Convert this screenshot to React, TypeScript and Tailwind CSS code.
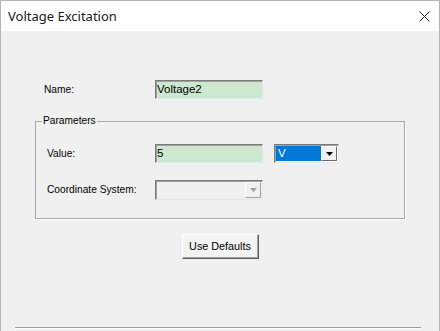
export default function App() {
  return (
    <div className="w-[440px] h-[331px] bg-[#f0f0f0] border border-b-0 border-[#b4b4b4] flex flex-col font-['Liberation_Sans',Arial,sans-serif] text-black overflow-hidden">
      {/* title bar */}
      <div className="h-[30px] bg-white flex items-center justify-between pl-[7px] pr-[9px] shrink-0">
        <span className="font-['Noto_Sans',sans-serif] text-[13px] text-[#1a1a1a] leading-none">
          Voltage Excitation
        </span>
        <svg width="11" height="11" viewBox="0 0 11 11" className="mt-[1px]">
          <path d="M0.5 0.5 L10.5 10.5 M10.5 0.5 L0.5 10.5" stroke="#222" strokeWidth="1" />
        </svg>
      </div>

      {/* name row */}
      <div className="flex items-center h-[19px] mt-[49px] pl-[43px]">
        <span className="w-[111px] text-[10.2px]">Name:</span>
        <div className="w-[108px] h-[19px] bg-[#cce8cf] border border-t-[#7a7a7a] border-l-[#7a7a7a] border-r-[#e8e8e8] border-b-[#e8e8e8] shadow-[inset_1px_1px_0_#a0a0a0] flex items-center pl-[1px] text-[11.5px] leading-none">
          Voltage2
        </div>
      </div>

      {/* parameters group */}
      <div className="relative ml-[34px] mt-[22px] w-[370px] h-[98px] border border-[#a8a8a8] shadow-[1px_1px_0_#fff] pt-[22px] pl-[11px]">
        <span className="absolute left-[6px] -top-[7px] px-[1px] bg-[#f0f0f0] text-[10.2px] leading-[12px]">
          Parameters
        </span>
        <div className="flex items-center h-[19px]">
          <span className="w-[108px] text-[10.2px]">Value:</span>
          <div className="w-[108px] h-[19px] bg-[#cce8cf] border border-t-[#7a7a7a] border-l-[#7a7a7a] border-r-[#e8e8e8] border-b-[#e8e8e8] shadow-[inset_1px_1px_0_#a0a0a0] flex items-center pl-[1px] text-[11.5px] leading-none">
            5
          </div>
          <div className="ml-[11px] w-[65px] h-[19px] bg-white border border-t-[#7a7a7a] border-l-[#7a7a7a] border-r-[#e8e8e8] border-b-[#e8e8e8] shadow-[inset_1px_1px_0_#a0a0a0] flex p-[1px]">
            <div className="flex-1 bg-[#0078d7] text-white text-[11.5px] leading-none flex items-center pl-[2px]">
              V
            </div>
            <div className="w-[16px] bg-[#f0f0f0] border border-t-white border-l-white border-r-[#696969] border-b-[#696969] flex items-center justify-center">
              <svg width="7" height="4" viewBox="0 0 7 4">
                <path d="M0 0 H7 L3.5 4 Z" fill="#000" />
              </svg>
            </div>
          </div>
        </div>
        <div className="flex items-center h-[20px] mt-[17px]">
          <span className="w-[108px] text-[10.2px]">Coordinate System:</span>
          <div className="w-[108px] h-[20px] bg-[#f0f0f0] border border-t-[#7a7a7a] border-l-[#7a7a7a] border-r-[#e8e8e8] border-b-[#e8e8e8] shadow-[inset_1px_1px_0_#a0a0a0] flex justify-end p-[1px]">
            <div className="w-[16px] bg-[#f0f0f0] border border-t-white border-l-white border-r-[#a0a0a0] border-b-[#a0a0a0] flex items-center justify-center">
              <svg width="7" height="4" viewBox="0 0 7 4">
                <path d="M0 0 H7 L3.5 4 Z" fill="#a0a0a0" />
              </svg>
            </div>
          </div>
        </div>
      </div>

      {/* button */}
      <button
        type="button"
        className="mx-auto mt-[15px] w-[77px] h-[25px] bg-[#f3f3f3] border border-t-white border-l-white border-r-[#5a5a5a] border-b-[#5a5a5a] shadow-[inset_-1px_-1px_0_#a0a0a0] text-[10.8px] leading-none"
      >
        Use Defaults
      </button>

      {/* bottom separator */}
      <div className="mt-auto mb-[2px] ml-[14px] w-[406px] h-[2px] border-t border-t-[#a0a0a0] border-b border-b-white" />
    </div>
  );
}
